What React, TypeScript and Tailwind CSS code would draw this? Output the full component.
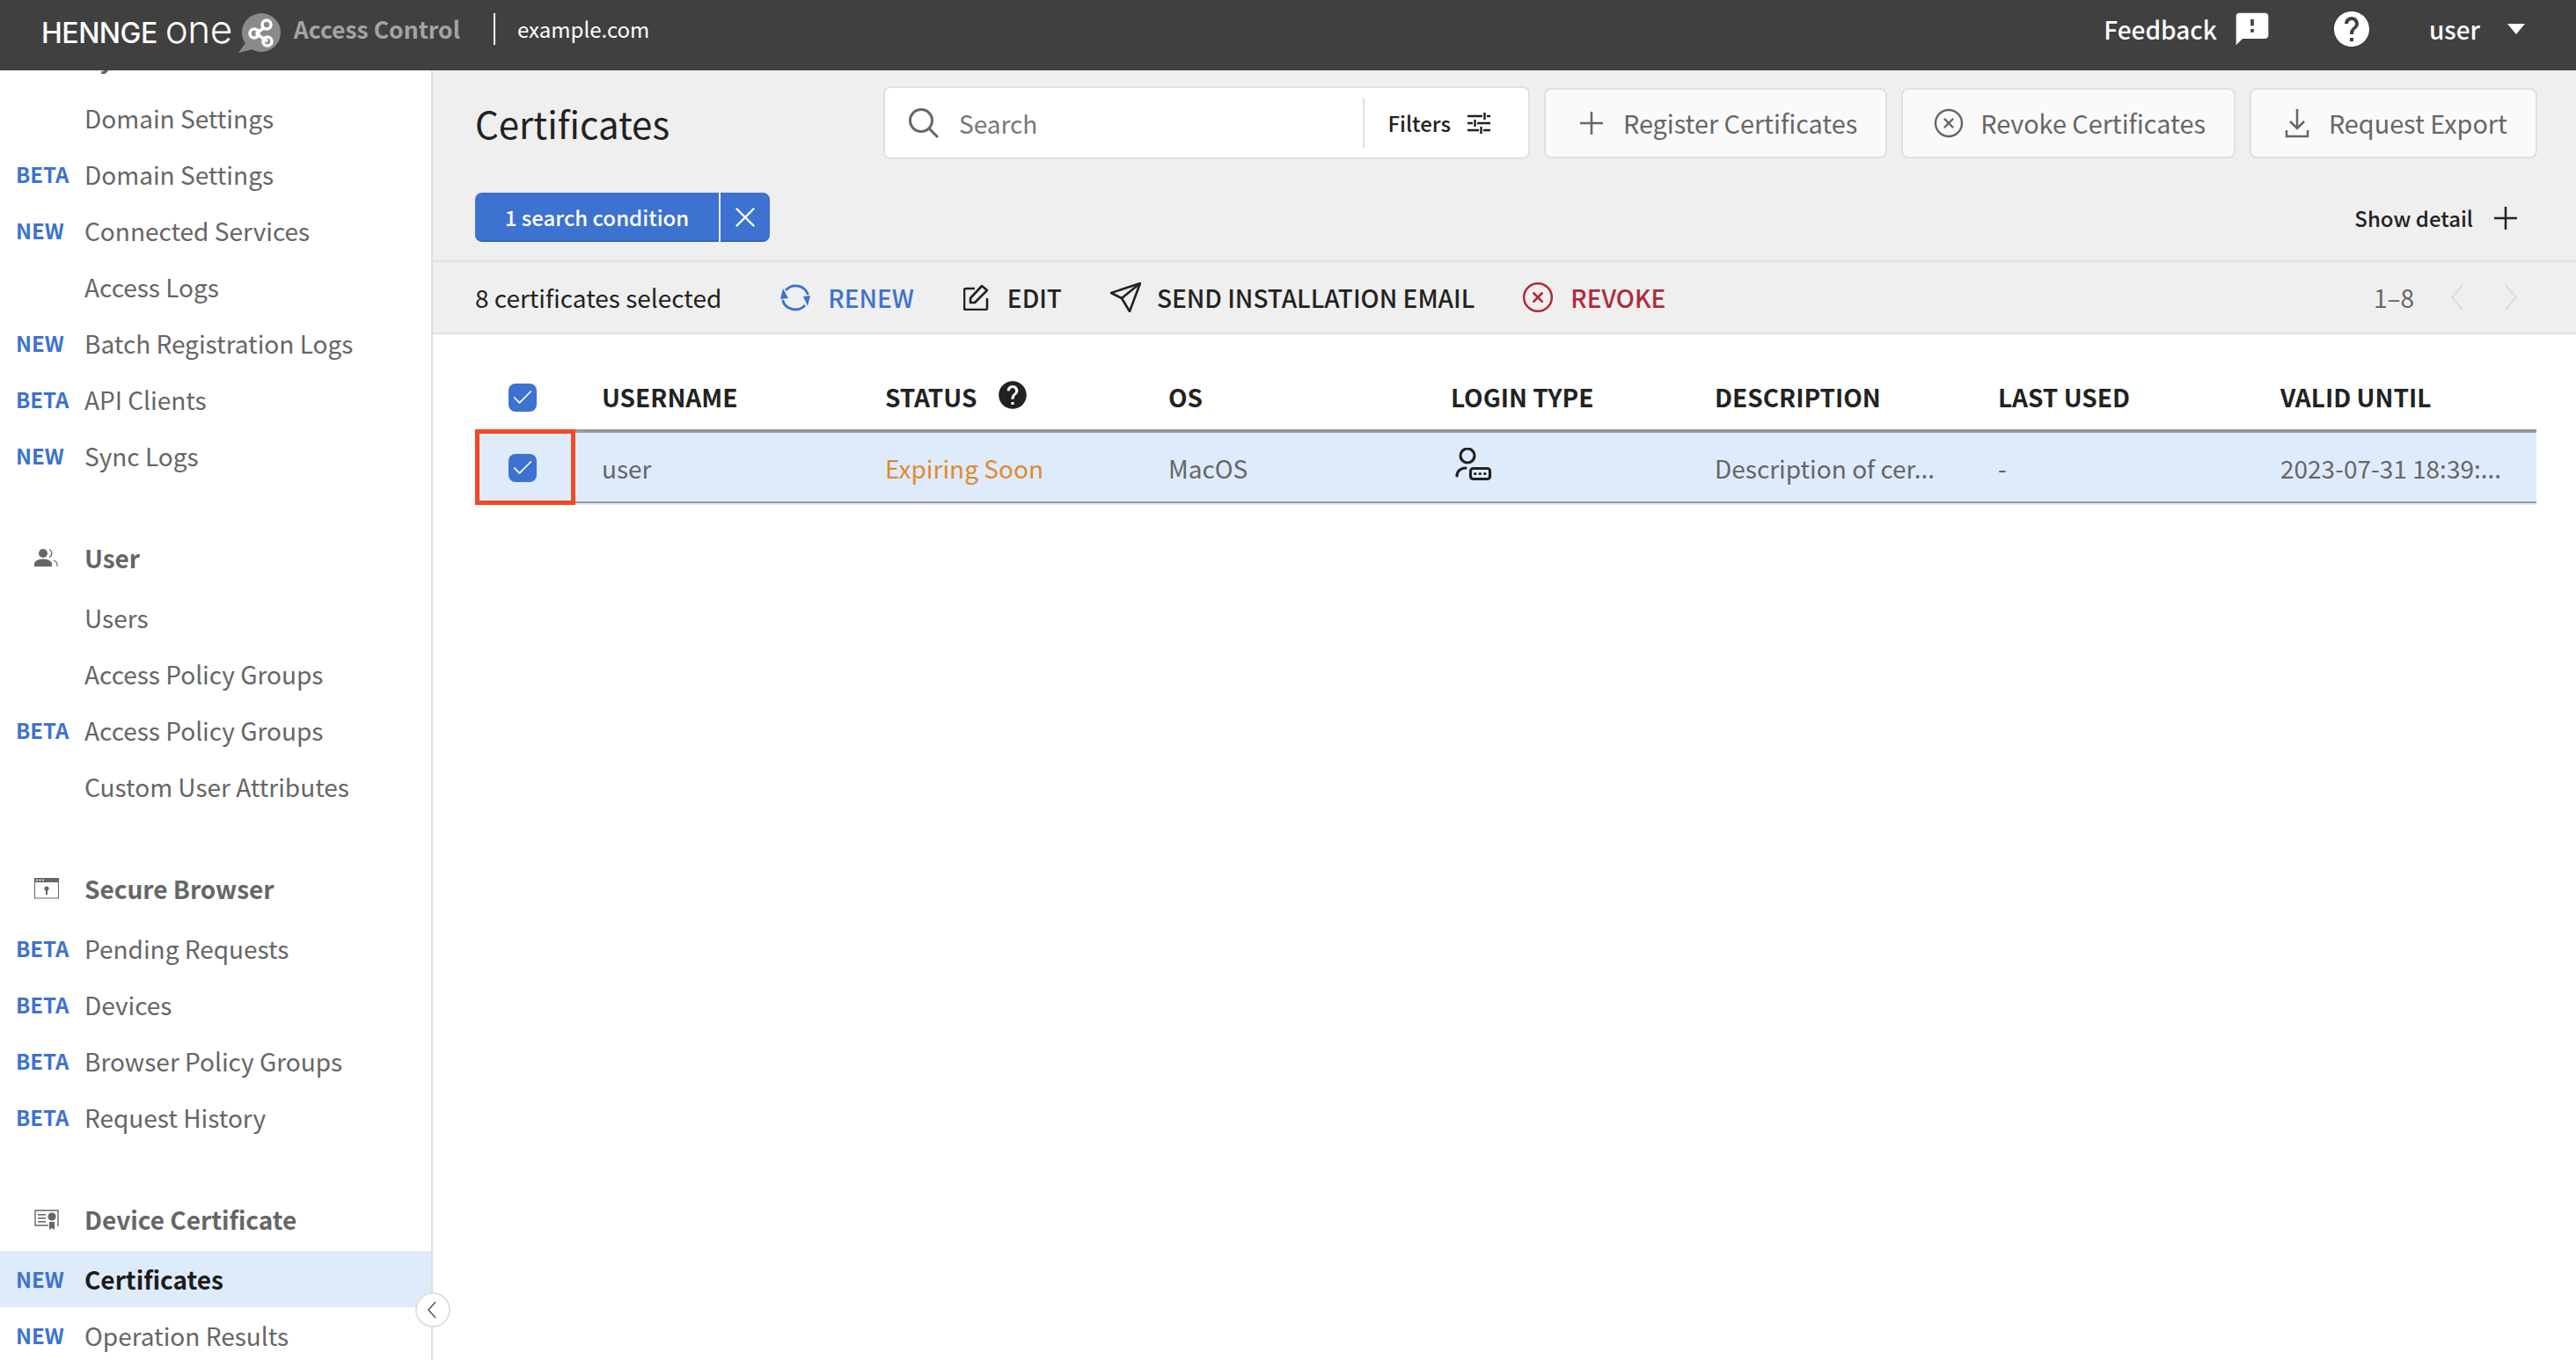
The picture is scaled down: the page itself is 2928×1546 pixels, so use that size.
import { CircleX, X, Check } from "lucide-react";
import { MdFeedback, MdHelp } from "react-icons/md";
import type { ReactNode } from "react";

const font = { fontFamily: '"Noto Sans CJK JP", "Noto Sans", sans-serif' };

type NavItem = { label: string; badge?: "BETA" | "NEW"; active?: boolean };
type NavSection = { title: string; icon: ReactNode; items: NavItem[] };

function UserIcon() {
  return (
    <svg viewBox="0 0 27 22" className="w-[27px] h-[22px] text-[#666]" fill="currentColor">
      <circle cx="10" cy="6" r="5" />
      <path d="M0 21v-3c0-3.500 5-5.500 10-5.500s10 2 10 5.500v3z" />
      <path d="M17 1.500a5 5 0 0 1 0 9" fill="none" stroke="currentColor" strokeWidth="1.200" />
      <path d="M22 14c2.500 1 4 2.500 4 4.500v2.500" fill="none" stroke="currentColor" strokeWidth="1.200" />
    </svg>
  );
}

function BrowserIcon() {
  return (
    <svg viewBox="0 0 28 24" className="w-[28px] h-[24px] text-[#666]" fill="currentColor">
      <rect x="0.500" y="0.500" width="27" height="22.500" fill="none" stroke="currentColor" />
      <rect x="0" y="0" width="28" height="5" />
      <circle cx="3" cy="2.500" r="1" fill="#fff" />
      <circle cx="6.500" cy="2.500" r="1" fill="#fff" />
      <circle cx="10" cy="2.500" r="1" fill="#fff" />
      <circle cx="14" cy="12" r="2.600" />
      <rect x="13" y="13" width="2" height="6" />
    </svg>
  );
}

function CertIcon() {
  return (
    <svg viewBox="0 0 28 23" className="w-[28px] h-[23px] text-[#666]" fill="currentColor">
      <path d="M16 18H1V1h26v17h-1" fill="none" stroke="currentColor" strokeWidth="1.400" />
      <rect x="4" y="5" width="9" height="1.600" />
      <rect x="4" y="9" width="9" height="1.600" />
      <rect x="4" y="13" width="9" height="1.600" />
      <circle cx="20" cy="8" r="4.600" />
      <path d="M17 14h6v9l-3-2-3 2z" />
    </svg>
  );
}

const sections: NavSection[] = [
  {
    title: "System",
    icon: null,
    items: [
      { label: "Domain Settings" },
      { label: "Domain Settings", badge: "BETA" },
      { label: "Connected Services", badge: "NEW" },
      { label: "Access Logs" },
      { label: "Batch Registration Logs", badge: "NEW" },
      { label: "API Clients", badge: "BETA" },
      { label: "Sync Logs", badge: "NEW" },
    ],
  },
  {
    title: "User",
    icon: <UserIcon />,
    items: [
      { label: "Users" },
      { label: "Access Policy Groups" },
      { label: "Access Policy Groups", badge: "BETA" },
      { label: "Custom User Attributes" },
    ],
  },
  {
    title: "Secure Browser",
    icon: <BrowserIcon />,
    items: [
      { label: "Pending Requests", badge: "BETA" },
      { label: "Devices", badge: "BETA" },
      { label: "Browser Policy Groups", badge: "BETA" },
      { label: "Request History", badge: "BETA" },
    ],
  },
  {
    title: "Device Certificate",
    icon: <CertIcon />,
    items: [
      { label: "Certificates", badge: "NEW", active: true },
      { label: "Operation Results", badge: "NEW" },
    ],
  },
];

function Sidebar() {
  return (
    <aside className="relative w-[492px] shrink-0 bg-white border-r-2 border-[#dedede]">
      <div className="h-full overflow-hidden">
        <div className="mt-[-50px] flex flex-col gap-[48px]">
          {sections.map((s) => (
            <div key={s.title}>
              <div className="h-[72px] flex items-center">
                <div className="w-[96px] pl-[39px] flex items-center">{s.icon}</div>
                <span className="text-[28px] font-semibold text-[#666]">{s.title}</span>
              </div>
              {s.items.map((item, i) => (
                <div key={i} className={`h-[64px] flex items-center ${item.active ? "bg-[#deebfb]" : ""}`}>
                  <span className="w-[96px] pl-[18px] mb-[1px] text-[24px] font-semibold text-[#3d72d0]">{item.badge}</span>
                  <span className={`text-[28px] ${item.active ? "font-bold text-[#1c1c1c]" : "text-[#666]"}`}>{item.label}</span>
                </div>
              ))}
            </div>
          ))}
        </div>
      </div>
      <button className="absolute right-[-22px] top-[1389px] w-[40px] h-[40px] rounded-full bg-white border-2 border-[#e0e0e0] flex items-center justify-center">
        <svg viewBox="0 0 10 20" className="w-[10px] h-[20px] mr-[2px]" fill="none" stroke="#555" strokeWidth="1.500">
          <path d="M9 1L1 10l8 9" />
        </svg>
      </button>
    </aside>
  );
}

function LogoMark() {
  return (
    <svg viewBox="0 0 48 46" className="w-[48px] h-[46px]">
      <circle cx="26" cy="22" r="22" fill="#8a8a8a" />
      <path d="M8 34L0 45l16-4z" fill="#8a8a8a" />
      <g fill="none" stroke="#fff" strokeWidth="3.500">
        <path d="M20 23l10-7M20 23l13 9" />
        <circle cx="18" cy="23" r="5" />
        <circle cx="32" cy="13" r="5" />
        <circle cx="33" cy="32" r="5" />
      </g>
    </svg>
  );
}

function Header() {
  return (
    <header className="h-[80px] shrink-0 bg-[#404040] flex items-center pl-[47px] pr-[58px] pb-[14px] text-white">
      <div className="flex items-baseline leading-none" style={{ fontFamily: '"Inter", sans-serif' }}>
        <span className="text-[32px] font-medium tracking-[-0.500px]">HENNGE</span>
        <span className="ml-[9px] text-[44px] font-light tracking-[-0.500px]">one</span>
      </div>
      <div className="ml-[7px] mt-[10px]"><LogoMark /></div>
      <span className="ml-[15px] text-[26.500px] font-semibold text-[#a3a3a3]">Access Control</span>
      <div className="ml-[38px] w-[2px] h-[36px] bg-white" />
      <span className="ml-[25px] text-[24px]">example.com</span>
      <span className="ml-auto text-[28px] font-medium">Feedback</span>
      <MdFeedback size={44} className="ml-[18px]" />
      <MdHelp size={48} className="ml-[67px]" />
      <span className="ml-[64px] text-[28px] font-medium">user</span>
      <div className="ml-[31px] w-0 h-0 border-x-[10px] border-x-transparent border-t-[12px] border-t-white" />
    </header>
  );
}

function OutlineButton({ icon, label }: { icon: ReactNode; label: string }) {
  return (
    <button className="h-[80px] pl-[34px] pr-[32px] flex items-center gap-[18px] whitespace-nowrap bg-[#fafafa] border-2 border-[#e0e0e0] rounded-[8px] text-[28.800px] text-[#666]">
      <span className="w-[36px] flex justify-center">{icon}</span>
      {label}
    </button>
  );
}

function PlusIcon({ size, className }: { size: number; className?: string }) {
  return (
    <svg viewBox="0 0 28 28" width={size} height={size} className={className} fill="none" stroke="currentColor" strokeWidth="2.500">
      <path d="M14 1v26M1 14h26" />
    </svg>
  );
}

function DownloadIcon() {
  return (
    <svg viewBox="0 0 28 34" className="w-[28px] h-[34px]" fill="none" stroke="currentColor" strokeWidth="2.500">
      <path d="M14 1v22M6 15l8 8 8-8" />
      <path d="M2 25v7h24v-7" />
    </svg>
  );
}

function FilterIcon() {
  return (
    <svg viewBox="0 0 26 24" className="w-[26px] h-[24px] text-[#222]" fill="none" stroke="currentColor" strokeWidth="2.500">
      <path d="M0 4h17M22 4h4M19.500 0v8M0 12h6M11 12h15M8.500 8v8M0 20h13M18 20h8M15.500 16v8" />
    </svg>
  );
}

function SearchIcon() {
  return (
    <svg viewBox="0 0 34 34" className="w-[34px] h-[34px] text-[#666]" fill="none" stroke="currentColor" strokeWidth="3">
      <circle cx="14" cy="14" r="12.500" />
      <path d="M23 23l10 10" />
    </svg>
  );
}

function SearchBar() {
  return (
    <div className="w-[735px] h-[83px] shrink-0 bg-white border-2 border-[#e0e0e0] rounded-[8px] flex items-center pl-[27px]">
      <SearchIcon />
      <span className="ml-[23px] flex-1 text-[28px] text-[#777]">Search</span>
      <div className="w-[2px] h-[56px] bg-[#e0e0e0]" />
      <span className="ml-[26px] text-[24px] font-medium text-[#222]">Filters</span>
      <div className="ml-[19px] mr-[43px]"><FilterIcon /></div>
    </div>
  );
}

function RenewIcon() {
  return (
    <svg viewBox="0 0 34 34" className="w-[34px] h-[34px] text-[#3d72d0]" fill="none" stroke="currentColor" strokeWidth="2.800">
      <path d="M6 9A15 15 0 0 1 31.500 14" />
      <path d="M28 26A15 15 0 0 1 2.500 20" />
      <path d="M3 7l6 11-9 1z" fill="currentColor" stroke="none" />
      <path d="M26 16l8-1-3 12z" fill="currentColor" stroke="none" />
    </svg>
  );
}

function EditIcon() {
  return (
    <svg viewBox="0 0 30 30" className="w-[30px] h-[30px]" fill="none" stroke="#222" strokeWidth="2.600" strokeLinejoin="round">
      <path d="M13 5H3a2 2 0 0 0-2 2v20a2 2 0 0 0 2 2h22a2 2 0 0 0 2-2V16" />
      <path d="M8 21v-5L21 2l6 5L13 21z" />
    </svg>
  );
}

function SendIcon() {
  return (
    <svg viewBox="0 0 35 34" className="w-[35px] h-[34px]" fill="none" stroke="#222" strokeWidth="2.600" strokeLinejoin="round">
      <path d="M34 1L1 12l12 6 9 15z" />
      <path d="M13 18L34 1" />
    </svg>
  );
}

function LoginTypeIcon() {
  return (
    <svg viewBox="0 0 42 38" className="w-[42px] h-[38px] text-[#222]" fill="none" stroke="currentColor" strokeWidth="3.200" strokeLinecap="round">
      <circle cx="14" cy="9" r="8" />
      <path d="M2 32c0-5 4-9 10-9" />
      <rect x="17.500" y="23.500" width="22" height="12" rx="3" />
      <path d="M22.500 29.500h.5M28 29.500h.5M33.500 29.500h.5" strokeWidth="3" />
    </svg>
  );
}

function PageChevron({ dir, className }: { dir: "left" | "right"; className?: string }) {
  return (
    <svg viewBox="0 0 14 30" className={`w-[14px] h-[30px] text-[#dcdcdc] ${className}`} fill="none" stroke="currentColor" strokeWidth="2">
      <path d={dir === "left" ? "M13 1L1 15l12 14" : "M1 1l12 14L1 29"} />
    </svg>
  );
}

function Toolbar() {
  return (
    <div className="h-[84px] shrink-0 bg-[#efefef] border-y-2 border-[#e0e0e0] flex items-center pl-[48px] pr-[67px] text-[#222]">
      <span className="text-[28px] mr-[67px]">8 certificates selected</span>
      <RenewIcon />
      <span className="ml-[20px] mr-[56px] text-[28px] font-medium text-[#3d72d0]">RENEW</span>
      <EditIcon />
      <span className="ml-[20px] mr-[55px] text-[28px] font-medium">EDIT</span>
      <SendIcon />
      <span className="ml-[18px] mr-[53px] text-[28px] font-medium">SEND INSTALLATION EMAIL</span>
      <CircleX size={38} strokeWidth={1.600} className="text-[#b02a3c]" />
      <span className="ml-[18px] text-[28px] font-medium text-[#b02a3c]">REVOKE</span>
      <span className="ml-auto text-[28px] text-[#666]">1–8</span>
      <PageChevron dir="left" className="ml-[42px]" />
      <PageChevron dir="right" className="ml-[47px]" />
    </div>
  );
}

function CheckBox() {
  return (
    <div className="w-[32px] h-[32px] rounded-[8px] bg-[#3d72d0] flex items-center justify-center text-white">
      <Check size={28} strokeWidth={1.500} />
    </div>
  );
}

function Table() {
  const cols = "grid grid-cols-[144px_322px_322px_321px_300px_322px_321px_1fr]";
  return (
    <div className="ml-[48px] mr-[45px] mt-[24px]">
      <div className={`${cols} h-[84px] pt-[10px] items-center text-[28px] font-bold text-[#222]`}>
        <div className="flex justify-center pr-[36px] mt-[2px]"><CheckBox /></div>
        <div>USERNAME</div>
        <div className="flex items-center gap-[22px]">
          STATUS
          <MdHelp size={38} className="text-[#222] mb-[4px]" />
        </div>
        <div>OS</div>
        <div>LOGIN TYPE</div>
        <div>DESCRIPTION</div>
        <div>LAST USED</div>
        <div>VALID UNTIL</div>
      </div>
      <div className={`${cols} relative h-[86px] pb-[2px] items-center text-[28px] text-[#666] bg-[#deebfb] border-t-[4px] border-[#999]`}>
        <div className="flex justify-center pr-[36px]"><CheckBox /></div>
        <div>user</div>
        <div className="text-[#e08a2e]">Expiring Soon</div>
        <div>MacOS</div>
        <div className="pl-[5px] mb-[9px]"><LoginTypeIcon /></div>
        <div>Description of cer...</div>
        <div>-</div>
        <div>2023-07-31 18:39:...</div>
        <div className="absolute left-0 right-0 bottom-[2px] h-[2px] bg-[#999]" />
        <div className="absolute left-0 top-[-4px] w-[114px] h-[86px] border-[5px] border-[#ef4a23]" />
      </div>
    </div>
  );
}

export default function App() {
  return (
    <div className="w-[2928px] h-[1546px] flex flex-col overflow-hidden bg-white leading-normal" style={font}>
      <Header />
      <div className="flex flex-1 min-h-0">
        <Sidebar />
        <main className="flex-1 flex flex-col min-w-0">
          <div className="bg-[#efefef] h-[216px] pl-[48px] pr-[45px] pt-[18px] flex flex-col">
            <div className="flex items-center">
              <h1 className="w-[464px] shrink-0 text-[42px] text-[#222]">Certificates</h1>
              <SearchBar />
              <div className="ml-[16px]"><OutlineButton icon={<PlusIcon size={28} />} label="Register Certificates" /></div>
              <div className="ml-[16px]"><OutlineButton icon={<CircleX size={38} strokeWidth={1.600} />} label="Revoke Certificates" /></div>
              <div className="ml-[16px]"><OutlineButton icon={<DownloadIcon />} label="Request Export" /></div>
            </div>
            <div className="mt-[38px] flex items-center">
              <div className="h-[56px] w-[277px] pt-[2px] bg-[#3d72d0] border-b-2 border-[#3365bd] rounded-l-[8px] text-white text-[24px] font-medium flex items-center justify-center">1 search condition</div>
              <div className="ml-[2px] h-[56px] w-[56px] pt-[2px] bg-[#3d72d0] border-b-2 border-[#3365bd] rounded-r-[8px] text-white flex items-center justify-center">
                <X size={38} strokeWidth={1.500} />
              </div>
              <span className="ml-auto pt-[2px] text-[24px] font-medium text-[#222]">Show detail</span>
              <PlusIcon size={28} className="ml-[23px] mr-[21px] mt-[2px] text-[#222]" />
            </div>
          </div>
          <Toolbar />
          <Table />
        </main>
      </div>
    </div>
  );
}
